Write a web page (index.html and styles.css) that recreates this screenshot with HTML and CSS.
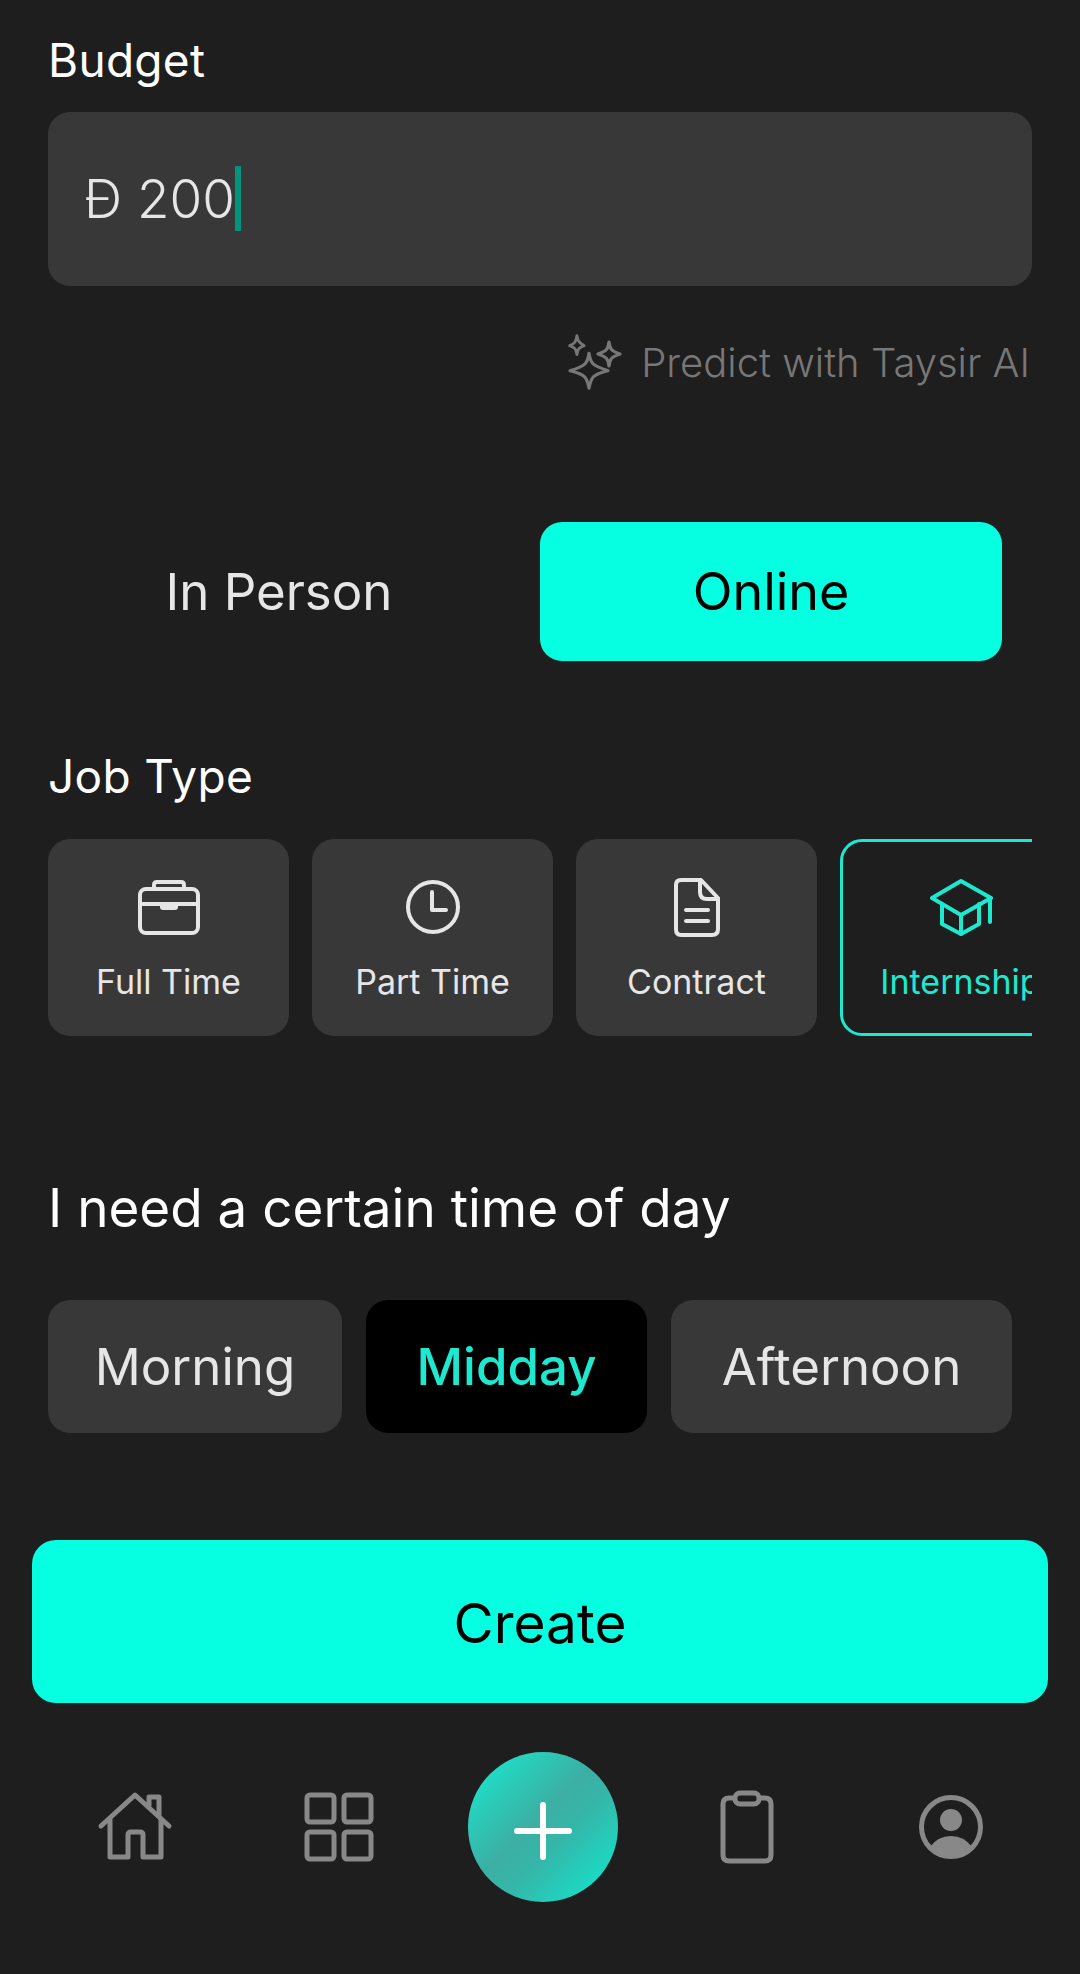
FILE: index.html
```html
<!DOCTYPE html>
<html lang="en">
<head>
    <meta charset="UTF-8">
    <meta name="viewport" content="width=device-width, initial-scale=1.0">
    <title>Create Job</title>
    <link rel="stylesheet" href="styles.css">
</head>
<body>
    <main class="form">
        <label class="field-label">Budget</label>
        <div class="budget-input">
            <span class="budget-value">Đ 200</span><span class="caret"></span>
        </div>

        <div class="predict">
            <svg class="predict-icon" viewBox="0 0 56 56" fill="none" stroke="#777" stroke-width="3.2" stroke-linejoin="round">
                <path d="M23 19 C24.500 30 26 32 42 38 C26 42 25 46 23 57 C21 46 20 42 4 38 C20 33 21.500 30 23 19 Z" transform="translate(0 -1) scale(1 .92) translate(0 3)"/>
                <path d="M11 3 C12 9 13 10 19 14 C13 16 12 18 11 24 C10 18 9 16 3 14 C9 12 10 9 11 3 Z" transform="translate(1 -1) scale(.9)"/>
                <path d="M43 8 C44 15 45 17 54 20 C45 23 44 25 43 32 C42 25 41 23 32 20 C41 17 42 15 43 8 Z"/>
            </svg>
            <span>Predict with Taysir AI</span>
        </div>

        <div class="mode-toggle">
            <button class="mode-btn">In Person</button>
            <button class="mode-btn active">Online</button>
        </div>

        <label class="field-label job-label">Job Type</label>
        <div class="job-types">
            <div class="job-card">
                <svg class="job-icon" viewBox="0 0 64 64" fill="none" stroke="#e6e6e6" stroke-width="4" stroke-linejoin="round" stroke-linecap="round">
                    <rect x="3" y="15" width="58" height="44" rx="6"/>
                    <path d="M17 15 V11 Q17 8 20 8 H44 Q47 8 47 11 V15"/>
                    <path d="M3 30 H61"/>
                    <path d="M23 30 H41 V33 Q41 36 38 36 H26 Q23 36 23 33 Z" fill="#e6e6e6" stroke="none"/>
                </svg>
                <span>Full Time</span>
            </div>
            <div class="job-card">
                <svg class="job-icon" viewBox="0 0 64 64" fill="none" stroke="#e6e6e6" stroke-width="4" stroke-linejoin="round" stroke-linecap="round">
                    <circle cx="32" cy="33" r="25"/>
                    <path d="M31 18 V36 H45"/>
                </svg>
                <span>Part Time</span>
            </div>
            <div class="job-card">
                <svg class="job-icon" viewBox="0 0 64 64" fill="none" stroke="#e6e6e6" stroke-width="4" stroke-linejoin="round" stroke-linecap="round">
                    <path d="M16 6 H36 L53 24 V55 Q53 61 47 61 H16 Q11 61 11 55 V11 Q11 6 16 6 Z"/>
                    <path d="M35 6 V18 Q35 25 42 25 H53"/>
                    <path d="M21 36 H43 M21 47 H43"/>
                </svg>
                <span>Contract</span>
            </div>
            <div class="job-card selected">
                <svg class="job-icon" viewBox="0 0 64 64" fill="none" stroke="#1de9d0" stroke-width="4" stroke-linejoin="round" stroke-linecap="round">
                    <path d="M32 7 L62 24 L32 41 L3 24 Z"/>
                    <path d="M13 30 V50 L32 60 L50 50 V30"/>
                    <path d="M32 41 V60"/>
                    <path d="M61 24 V48"/>
                </svg>
                <span>Internship</span>
            </div>
        </div>

        <h2 class="time-heading">I need a certain time of day</h2>
        <div class="time-options">
            <button class="time-btn morning">Morning</button>
            <button class="time-btn midday active">Midday</button>
            <button class="time-btn afternoon">Afternoon</button>
        </div>
    </main>

    <button class="create-btn">Create</button>

    <nav class="tabbar">
        <div class="tab">
            <svg width="76" height="72" viewBox="0 0 76 72" fill="none" stroke="#888" stroke-width="5" stroke-linejoin="round" stroke-linecap="round">
                <path d="M4 35 L38 4 L72 35"/>
                <path d="M13 28 V66 H31 V44 Q31 41 34 41 H43 Q46 41 46 44 V66 H64 V28"/>
                <path d="M52 14 V6 H62 V25"/>
            </svg>
        </div>
        <div class="tab">
            <svg width="70" height="70" viewBox="0 0 70 70" fill="none" stroke="#888" stroke-width="5" stroke-linejoin="round">
                <rect x="3" y="3" width="27" height="27" rx="3"/>
                <rect x="40" y="3" width="27" height="27" rx="3"/>
                <rect x="3" y="40" width="27" height="27" rx="3"/>
                <rect x="40" y="40" width="27" height="27" rx="3"/>
            </svg>
        </div>
        <div class="tab">
            <div class="add-btn">
                <svg width="58" height="58" viewBox="0 0 58 58" fill="none" stroke="#fff" stroke-width="6" stroke-linecap="round">
                    <path d="M29 3 V55 M3 29 H55"/>
                </svg>
            </div>
        </div>
        <div class="tab">
            <svg width="54" height="74" viewBox="0 0 54 74" fill="none" stroke="#888" stroke-width="5" stroke-linejoin="round">
                <path d="M15 8 H9 Q3 8 3 14 V65 Q3 71 9 71 H45 Q51 71 51 65 V14 Q51 8 45 8 H39"/>
                <rect x="15" y="3" width="24" height="11" rx="5"/>
            </svg>
        </div>
        <div class="tab">
            <svg width="66" height="66" viewBox="0 0 66 66" fill="none">
                <circle cx="33" cy="33" r="29.500" stroke="#888" stroke-width="5"/>
                <circle cx="33" cy="26" r="11" fill="#888"/>
                <path d="M12 53 Q20 42 33 42 Q46 42 54 53 Q45 63 33 63 Q21 63 12 53 Z" fill="#888"/>
            </svg>
        </div>
    </nav>
</body>
</html>
```

FILE: styles.css
```css
* {
    box-sizing: border-box;
}

body {
    margin: 0;
    height: 1974px;
    overflow: hidden;
    background: #1e1e1e;
    font-family: 'Inter', sans-serif;
    font-weight: 400;
    color: #fff;
}

button {
    border: none;
    font-family: inherit;
    font-weight: 400;
    padding: 0;
}

.form {
    padding: 36px 48px 0;
}

.field-label {
    display: block;
    font-size: 46px;
    font-weight: 400;
    line-height: 48px;
    letter-spacing: 0.3px;
    color: #fff;
}

.budget-input {
    display: flex;
    align-items: center;
    height: 174px;
    margin-top: 28px;
    padding-left: 36px;
    background: #383838;
    border-radius: 22px;
    font-size: 53px;
    font-weight: 300;
    color: #e6e6e6;
}

.caret {
    width: 6px;
    height: 65px;
    margin-top: -2px;
    background: #00937f;
}

.predict {
    display: flex;
    justify-content: flex-end;
    align-items: center;
    gap: 19px;
    height: 56px;
    margin-top: 48px;
    padding-right: 2px;
    font-size: 40px;
    font-weight: 300;
    color: #777;
}

.predict-icon {
    width: 56px;
    height: 56px;
}

.mode-toggle {
    display: flex;
    align-items: center;
    gap: 30px;
    height: 139px;
    margin-top: 132px;
    padding-right: 30px;
}

.mode-btn {
    flex: 1;
    height: 100%;
    background: transparent;
    border-radius: 22px;
    font-size: 51px;
    color: #e6e6e6;
}

.mode-btn.active {
    background: #05ffe0;
    font-size: 52px;
    color: #000;
}

.job-label {
    margin-top: 91px;
}

.job-types {
    display: flex;
    gap: 23px;
    height: 197px;
    margin-top: 39px;
    overflow: hidden;
}

.job-card {
    flex: 0 0 241px;
    display: flex;
    flex-direction: column;
    align-items: center;
    padding-top: 35px;
    background: #383838;
    border-radius: 22px;
    font-size: 34px;
    color: #e6e6e6;
    white-space: nowrap;
}

.job-card span {
    margin-top: 23px;
}

.job-card.selected {
    background: transparent;
    border: 3px solid #1de9d0;
    color: #1de9d0;
    padding-top: 32px;
}

.job-icon {
    width: 64px;
    height: 64px;
}

.time-heading {
    margin: 142px 0 0;
    font-size: 53px;
    line-height: 60px;
    font-weight: 400;
}

.time-options {
    display: flex;
    gap: 24px;
    height: 133px;
    margin-top: 62px;
}

.time-btn {
    background: #383838;
    border-radius: 22px;
    font-size: 51px;
    color: #e6e6e6;
}

.time-btn.morning {
    width: 294px;
}

.time-btn.midday {
    width: 281px;
}

.time-btn.afternoon {
    width: 341px;
}

.time-btn.active {
    background: #000;
    font-weight: 500;
    color: #1de9d0;
}

.create-btn {
    display: block;
    width: 1016px;
    height: 163px;
    margin: 107px 32px 0;
    padding-top: 3px;
    background: #05ffe0;
    border-radius: 24px;
    font-size: 55px;
    color: #000;
}

.tabbar {
    display: grid;
    grid-template-columns: repeat(5, 204px);
    align-items: center;
    height: 150px;
    margin-top: 49px;
    padding-left: 33px;
}

.tab {
    display: flex;
    justify-content: center;
    align-items: center;
}

.add-btn {
    display: flex;
    justify-content: center;
    align-items: center;
    width: 150px;
    height: 150px;
    padding-top: 8px;
    border-radius: 50%;
    background: linear-gradient(135deg, #1de0c8 10%, #3cafa3 45%, #35b6a9 60%, #17dfc8 90%);
}
```
